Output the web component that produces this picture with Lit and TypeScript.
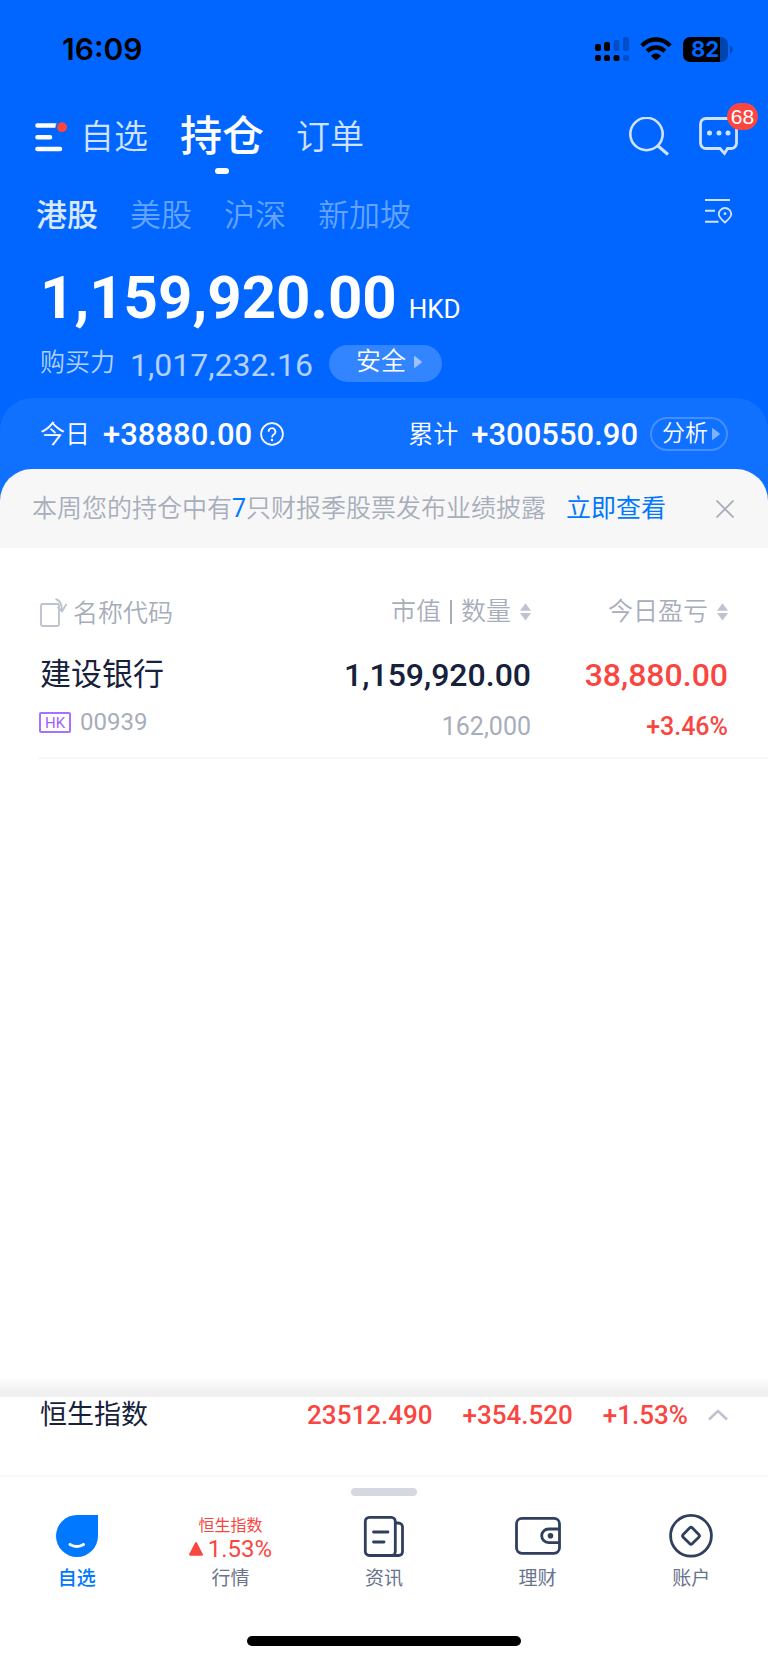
import { LitElement, html, css } from "lit";
import { customElement, state } from "lit/decorators.js";

interface Holding {
  name: string;
  market: string;
  code: string;
  value: string;
  quantity: string;
  profit: string;
  rate: string;
}

@customElement("status-bar")
class StatusBar extends LitElement {
  static styles = css`
    :host {
      display: flex;
      align-items: center;
      justify-content: space-between;
      height: 98px;
      padding: 0 35px 0 62px;
      color: #000;
    }
    time {
      font: 600 30px/36px Inter, sans-serif;
    }
    .icons {
      display: flex;
      align-items: center;
      gap: 11px;
    }
    svg {
      display: block;
    }
    .battery {
      display: grid;
      align-items: center;
    }
    .battery > * {
      grid-area: 1 / 1;
    }
    .level {
      padding-left: 8px;
      color: #0066ff;
      font: 700 22px/25px Inter, sans-serif;
    }
  `;

  render() {
    return html`
      <time>16:09</time>
      <div class="icons">
        <svg width="34" height="26" viewBox="0 0 34 26" aria-hidden="true">
          <g>
            <rect x="0" y="8" width="6" height="7" rx="2" />
            <rect x="9" y="6" width="6" height="9" rx="2" />
            <rect x="0" y="19" width="6" height="6" rx="2" />
            <rect x="9" y="19" width="6" height="6" rx="2" />
            <rect x="18.500" y="19" width="6" height="6" rx="2" />
          </g>
          <g opacity="0.22">
            <rect x="18.500" y="4" width="6" height="11" rx="2" />
            <rect x="28" y="1" width="6" height="14" rx="2" />
            <rect x="28" y="19" width="6" height="6" rx="2" />
          </g>
        </svg>
        <svg width="32" height="24" viewBox="0 0 32 24" aria-hidden="true">
          <path
            d="M0.300 7.200C9-2.200 23-2.200 31.700 7.200L28.700 10.200C21.500 3 10.500 3 3.300 10.200Z"
          />
          <path
            d="M5.500 12.600C11.500 6.700 20.500 6.700 26.500 12.600L23.400 15.700C19 11.700 13 11.700 8.600 15.700Z"
          />
          <path
            d="M11.500 18.300C14 16 18 16 20.500 18.300C20.900 18.700 20.900 19 20.500 19.400L16.700 23.100C16.200 23.600 15.800 23.600 15.300 23.100L11.500 19.400C11.100 19 11.100 18.700 11.500 18.300Z"
          />
        </svg>
        <div class="battery">
          <svg width="50" height="25" viewBox="0 0 50 25" aria-hidden="true">
            <path d="M37 0V25H7A7 7 0 0 1 0 18V7A7 7 0 0 1 7 0Z" />
            <path
              opacity="0.32"
              d="M37 0H38A7 7 0 0 1 45 7V18A7 7 0 0 1 38 25H37ZM47 8.500C50.500 10 50.500 15 47 16.500Z"
            />
          </svg>
          <span class="level">82</span>
        </div>
      </div>
    `;
  }
}

@customElement("sort-mark")
class SortMark extends LitElement {
  static styles = css`
    :host {
      display: block;
    }
    svg {
      display: block;
    }
  `;

  render() {
    return html`<svg width="11" height="18" viewBox="0 0 11 18" fill="#bfc3d0" aria-hidden="true">
      <path d="M5.500 0.300L11 7.800H0ZM0 10H11L5.500 17.500Z" />
    </svg>`;
  }
}

@customElement("tab-bar")
class TabBar extends LitElement {
  static styles = css`
    :host {
      display: block;
      border-top: 2px solid #f7f7f8;
    }
    .handle {
      width: 66px;
      height: 8px;
      margin: 11px auto 19px;
      border-radius: 4px;
      background: #d5d8e1;
    }
    nav {
      display: grid;
      grid-template-columns: repeat(5, 1fr);
    }
    a {
      display: flex;
      flex-direction: column;
      align-items: center;
      gap: 8px;
      color: #69738c;
      font-size: 19px;
      line-height: 28px;
      text-decoration: none;
    }
    a.active {
      color: #0078ff;
      font-weight: 500;
    }
    svg {
      display: block;
      height: 42px;
    }
    .quote {
      display: flex;
      flex-direction: column;
      align-items: center;
      height: 42px;
      color: #f94641;
      font-size: 16px;
      line-height: 22px;
    }
    .change {
      display: flex;
      align-items: center;
      gap: 5px;
      font-size: 24px;
      line-height: 24px;
    }
    .change svg {
      height: 14px;
    }
    .home {
      width: 274px;
      max-width: 60%;
      height: 10px;
      margin: 43px auto 17px;
      border-radius: 5px;
      background: #000;
    }
  `;

  render() {
    return html`
      <div class="handle"></div>
      <nav>
        <a class="active" href="#watch">
          <svg width="42" viewBox="0 0 42 42" aria-hidden="true">
            <path d="M21 0H42V21A21 21 0 1 1 21 0Z" fill="#0078ff" />
            <path
              d="M14 29.500C18 32 23.500 32 27.500 29.500"
              fill="none"
              stroke="#fff"
              stroke-width="3"
              stroke-linecap="round"
            />
          </svg>
          <span>自选</span>
        </a>
        <a href="#quotes">
          <span class="quote">
            <span>恒生指数</span>
            <span class="change">
              <svg width="14" viewBox="0 0 14 14" aria-hidden="true">
                <path
                  d="M7 1.200L12.800 12.600H1.200Z"
                  fill="#f94641"
                  stroke="#f94641"
                  stroke-width="2.200"
                  stroke-linejoin="round"
                />
              </svg>
              1.53%
            </span>
          </span>
          <span>行情</span>
        </a>
        <a href="#news">
          <svg width="42" viewBox="0 0 42 42" fill="none" stroke="#303f5e" stroke-width="2.800" aria-hidden="true">
            <rect x="2.300" y="2.300" width="30" height="38.200" rx="4" />
            <path d="M32.500 8H35.500A4 4 0 0 1 39.500 12V36.800A3.700 3.700 0 0 1 35.800 40.500H28" />
            <path d="M10.500 17H25M10.500 27H21" stroke-linecap="round" />
          </svg>
          <span>资讯</span>
        </a>
        <a href="#wealth">
          <svg width="46" viewBox="0 0 46 42" fill="none" stroke="#303f5e" stroke-width="2.800" aria-hidden="true">
            <rect x="1.500" y="3.300" width="43" height="35" rx="5.500" />
            <path d="M44.500 14H33.500A6.800 6.800 0 0 0 33.500 27.600H44.500" />
            <circle cx="35.500" cy="20.800" r="2.800" fill="#303f5e" stroke="none" />
          </svg>
          <span>理财</span>
        </a>
        <a href="#account">
          <svg width="44" viewBox="0 0 44 42" overflow="visible" fill="none" stroke="#303f5e" stroke-width="2.800" aria-hidden="true">
            <circle cx="22" cy="20.800" r="20.400" />
            <rect x="15.500" y="14.300" width="13" height="13" rx="2" transform="rotate(45 22 20.800)" />
          </svg>
          <span>账户</span>
        </a>
      </nav>
      <div class="home"></div>
    `;
  }
}

@customElement("app-root")
class AppRoot extends LitElement {
  @state() private market = "港股";

  private markets = ["港股", "美股", "沪深", "新加坡"];

  private holdings: Holding[] = [
    {
      name: "建设银行",
      market: "HK",
      code: "00939",
      value: "1,159,920.00",
      quantity: "162,000",
      profit: "38,880.00",
      rate: "+3.46%",
    },
  ];

  static styles = css`
    :host {
      display: flex;
      flex-direction: column;
      min-height: 100vh;
      background: #fff;
      color: #16213b;
      font-family: Roboto, "Noto Sans CJK SC", sans-serif;
      font-weight: 400;
    }
    * {
      box-sizing: border-box;
    }
    button {
      display: flex;
      align-items: center;
      margin: 0;
      padding: 0;
      border: 0;
      background: none;
      color: inherit;
      font: inherit;
      white-space: nowrap;
    }
    svg {
      display: block;
      flex: none;
    }
    a {
      text-decoration: none;
    }
    .top {
      background: #0066ff;
      color: #fff;
    }

    .nav {
      display: flex;
      align-items: center;
      height: 78px;
      padding: 0 30px 0 35px;
    }
    .views {
      display: flex;
      align-items: center;
      gap: 32px;
      margin-left: 13px;
      font-size: 34px;
      line-height: 50px;
    }
    .views a {
      color: #d0e2ff;
      font-weight: 350;
    }
    .views a.current {
      position: relative;
      color: #fff;
      font-size: 42px;
      font-weight: 500;
    }
    .current::after {
      content: "";
      position: absolute;
      left: 50%;
      bottom: -12px;
      width: 14px;
      height: 6px;
      margin-left: -7px;
      border-radius: 3px;
      background: #fff;
    }
    .actions {
      display: flex;
      gap: 30px;
      margin-left: auto;
    }
    .messages {
      position: relative;
    }
    .badge {
      position: absolute;
      top: -14px;
      right: -20px;
      width: 31px;
      height: 27px;
      border-radius: 14px;
      background: #f94641;
      color: #fff;
      font: 400 21px/28px "Liberation Sans", sans-serif;
      text-align: center;
    }

    .markets {
      display: flex;
      align-items: center;
      gap: 32px;
      height: 80px;
      padding: 0 36px;
      font-size: 31px;
      line-height: 46px;
    }
    .markets button {
      color: #66a3ff;
      font-weight: 350;
    }
    .markets button[aria-pressed="true"] {
      color: #d9e8ff;
      font-weight: 500;
    }
    .markets button.filter {
      margin: -10px 0 0 auto;
    }

    .total {
      display: flex;
      align-items: baseline;
      gap: 12px;
      height: 80px;
      padding: 4px 40px 0;
      font-size: 60px;
      font-weight: 700;
      line-height: 76px;
    }
    .currency {
      font-size: 26px;
      font-weight: 400;
    }

    .power {
      display: flex;
      align-items: center;
      height: 62px;
      padding: 0 40px 8px;
      color: #b3d1ff;
      font-size: 32px;
      line-height: 40px;
    }
    .label {
      font-size: 25px;
      font-weight: 350;
    }
    .power .amount {
      margin: 3px 16px 0 15px;
    }
    .power button.safe {
      gap: 8px;
      height: 37px;
      padding: 0 20px 2px 27px;
      border-radius: 19px;
      background: #3385ff;
      color: #fff;
      font-size: 25px;
      font-weight: 350;
    }

    .panel {
      border-radius: 32px 32px 0 0;
      background: #1070ff;
    }
    .gains {
      display: flex;
      align-items: center;
      justify-content: space-between;
      height: 71px;
      padding: 0 40px;
    }
    .gain {
      display: flex;
      align-items: center;
      font-size: 31px;
      font-weight: 500;
      line-height: 40px;
    }
    .gain .label {
      margin-top: 2px;
    }
    .gain .amount {
      margin: 2px 8px 0 13px;
    }
    .gain button.analyse {
      gap: 4px;
      height: 34px;
      padding: 0 6px 0 10px;
      margin-left: 4px;
      border: 2px solid #4590ff;
      border-radius: 17px;
      font-size: 23px;
      font-weight: 350;
    }

    .notice {
      display: flex;
      align-items: center;
      height: 79px;
      padding: 0 34px 0 32px;
      border-radius: 32px 32px 0 0;
      background: #f7f7f7;
      color: #a7adbb;
      font-size: 25px;
      line-height: 36px;
    }
    .notice p {
      margin: 0;
      font-weight: 350;
    }
    .notice a {
      margin-left: 20px;
      color: #0078ff;
    }
    .notice em {
      color: #0078ff;
      font-style: normal;
      font-weight: 400;
    }
    .notice button.close {
      margin-left: auto;
    }

    .holdings {
      flex: 1;
      padding: 45px 0 0 38px;
    }
    table {
      width: 100%;
      border-collapse: collapse;
      table-layout: fixed;
      text-align: right;
    }
    .col-value {
      width: 32%;
    }
    .col-profit {
      width: 237px;
    }
    th,
    td {
      padding: 0;
      white-space: nowrap;
      vertical-align: top;
    }
    th:last-child,
    td:last-child {
      padding-right: 40px;
    }
    th:first-child,
    td:first-child {
      text-align: left;
    }
    thead th {
      color: #a7adbb;
      font-size: 25px;
      font-weight: 350;
      line-height: 38px;
    }
    thead button {
      gap: 9px;
      margin-left: auto;
    }
    thead th:first-child button {
      gap: 6px;
      margin: 2px 0 0 1px;
    }
    .bar {
      width: 2px;
      height: 24px;
      background: #a7adbb;
    }
    tbody tr {
      border-bottom: 2px solid #f8f8f9;
    }
    tbody td {
      height: 125px;
      padding-top: 20px;
      font-size: 32px;
      font-weight: 500;
      line-height: 44px;
    }
    .name {
      padding-left: 2px;
      font-size: 31px;
      font-weight: 400;
    }
    .id {
      display: flex;
      align-items: center;
      gap: 9px;
      height: 50px;
      padding-left: 1px;
      color: #a7adbb;
      font-size: 24px;
      font-weight: 400;
    }
    .tag {
      width: 32px;
      height: 21px;
      border: 2px solid #a870ff;
      border-radius: 2px;
      color: #a060ff;
      font-size: 15px;
      line-height: 18px;
      text-align: center;
    }
    .second {
      padding-top: 8px;
      color: #a7adbb;
      font-size: 25px;
      font-weight: 400;
    }
    .up,
    .up .second {
      color: #f94641;
    }
    .up .second {
      font-weight: 500;
    }

    .fade {
      height: 20px;
      background: linear-gradient(#fff, #f0f0f0 70%);
    }
    .index {
      display: flex;
      align-items: center;
      gap: 30px;
      height: 78px;
      padding: 0 40px 42px;
      color: #f94641;
      font-size: 26px;
      font-weight: 500;
      line-height: 36px;
    }
    .index .title {
      margin-right: auto;
      color: #16213b;
      font-size: 27px;
      font-weight: 400;
    }
    .index button {
      margin-left: -10px;
    }
  `;

  private arrow(color: string) {
    return html`<svg width="8" height="12" viewBox="0 0 8 12" fill=${color} aria-hidden="true">
      <path d="M0 1Q0 -0.500 1.300 0.500L7.400 5.200Q8.200 6 7.400 6.800L1.300 11.500Q0 12.500 0 11Z" />
    </svg>`;
  }

  render() {
    return html`
      <header class="top">
        <status-bar></status-bar>
        <div class="nav">
          <button aria-label="菜单">
            <svg width="32" height="30" viewBox="0 0 32 30" aria-hidden="true">
              <g fill="none" stroke="#fff" stroke-width="4.600">
                <path d="M2.500 3.500H20.500M2.500 15.200H15M2.500 27H25" stroke-linecap="round" />
              </g>
              <circle cx="27" cy="5.200" r="6.500" fill="#0066ff" />
              <circle cx="27" cy="5.200" r="5" fill="#f94641" />
            </svg>
          </button>
          <nav class="views">
            <a href="#watch">自选</a>
            <a href="#positions" class="current">持仓</a>
            <a href="#orders">订单</a>
          </nav>
          <div class="actions">
            <button aria-label="搜索">
              <svg width="40" height="40" viewBox="0 0 40 40" fill="none" stroke="#d0e2ff" stroke-width="2.600" aria-hidden="true">
                <circle cx="17.500" cy="17" r="16.200" />
                <path d="M28.500 28.500L39 37.500" stroke-width="3" />
              </svg>
            </button>
            <button class="messages" aria-label="消息 68">
              <svg width="39" height="40" viewBox="0 0 39 40" aria-hidden="true">
                <path
                  d="M7 1.500H32A5.500 5.500 0 0 1 37.500 7V26A5.500 5.500 0 0 1 32 31.500H28.500L25.500 36.500L21 31.500H7A5.500 5.500 0 0 1 1.500 26V7A5.500 5.500 0 0 1 7 1.500Z"
                  fill="none"
                  stroke="#d0e2ff"
                  stroke-width="2.800"
                />
                <g fill="#d0e2ff">
                  <circle cx="10.500" cy="16" r="2.500" />
                  <circle cx="20" cy="16" r="2.500" />
                  <circle cx="29" cy="16" r="2.500" />
                </g>
              </svg>
              <span class="badge">68</span>
            </button>
          </div>
        </div>
        <div class="markets">
          ${this.markets.map(
            (m) => html`<button
              aria-pressed=${m === this.market ? "true" : "false"}
              @click=${() => (this.market = m)}
            >
              ${m}
            </button>`,
          )}
          <button class="filter" aria-label="筛选">
            <svg width="28" height="26" viewBox="0 0 28 26" fill="none" stroke="#d0e2ff" stroke-width="2" aria-hidden="true">
              <path d="M1 2H26M1 12.700H11M1 23.700H14.500" />
              <path d="M21 24.500C17 21 14.800 19 14.800 16.200A6.200 6.200 0 0 1 27.200 16.200C27.200 19 25 21 21 24.500Z" stroke-width="1.800" />
              <circle cx="21" cy="15.700" r="1.400" fill="#d0e2ff" stroke="none" />
            </svg>
          </button>
        </div>
        <div class="total"><span>1,159,920.00</span><span class="currency">HKD</span></div>
        <div class="power">
          <span class="label">购买力</span>
          <span class="amount">1,017,232.16</span>
          <button class="safe">安全 ${this.arrow("#99c2ff")}</button>
        </div>
        <div class="panel">
          <div class="gains">
            <div class="gain">
              <span class="label">今日</span>
              <span class="amount">+38880.00</span>
              <button aria-label="说明">
                <svg width="24" height="24" viewBox="0 0 24 24" fill="none" stroke="#fff" stroke-width="1.700" aria-hidden="true">
                  <circle cx="12" cy="12" r="10.900" />
                  <path d="M8.600 9.800A3.400 3.400 0 1 1 13.700 12.500C12.500 13.200 12 13.800 12 15.400" />
                  <circle cx="12" cy="18" r="1.200" fill="#fff" stroke="none" />
                </svg>
              </button>
            </div>
            <div class="gain">
              <span class="label">累计</span>
              <span class="amount">+300550.90</span>
              <button class="analyse">分析 ${this.arrow("#7db2ff")}</button>
            </div>
          </div>
          <div class="notice">
            <p>本周您的持仓中有<em>7</em>只财报季股票发布业绩披露</p>
            <a href="#reports">立即查看</a>
            <button class="close" aria-label="关闭">
              <svg width="18" height="18" viewBox="0 0 18 18" stroke="#a7adbb" stroke-width="1.800" aria-hidden="true">
                <path d="M0.500 0.500L17.500 17.500M17.500 0.500L0.500 17.500" />
              </svg>
            </button>
          </div>
        </div>
      </header>

      <main class="holdings">
        <table>
          <colgroup>
            <col />
            <col class="col-value" />
            <col class="col-profit" />
          </colgroup>
          <thead>
            <tr>
              <th scope="col">
                <button>
                  <svg width="28" height="32" viewBox="0 0 28 32" fill="none" stroke="#bfc3d0" stroke-width="1.900" aria-hidden="true">
                    <rect x="2" y="6" width="18" height="22" rx="1.500" />
                    <path d="M16.500 1C21 2 23 6 23 13M18.800 9L23 13.500L27.500 6" />
                  </svg>
                  名称代码
                </button>
              </th>
              <th scope="col">
                <button>市值<span class="bar"></span>数量<sort-mark></sort-mark></button>
              </th>
              <th scope="col">
                <button>今日盈亏<sort-mark></sort-mark></button>
              </th>
            </tr>
          </thead>
          <tbody>
            ${this.holdings.map(
              (h) => html`<tr>
                <td>
                  <div class="name">${h.name}</div>
                  <div class="id"><span class="tag">${h.market}</span>${h.code}</div>
                </td>
                <td>
                  <div>${h.value}</div>
                  <div class="second">${h.quantity}</div>
                </td>
                <td class="up">
                  <div>${h.profit}</div>
                  <div class="second">${h.rate}</div>
                </td>
              </tr>`,
            )}
          </tbody>
        </table>
      </main>

      <footer>
        <div class="fade"></div>
        <div class="index">
          <span class="title">恒生指数</span>
          <span>23512.490</span>
          <span>+354.520</span>
          <span>+1.53%</span>
          <button aria-label="展开">
            <svg width="20" height="12" viewBox="0 0 20 12" fill="none" stroke="#bfc3d0" stroke-width="2.600" aria-hidden="true">
              <path d="M1 10.500L10 2L19 10.500" />
            </svg>
          </button>
        </div>
        <tab-bar></tab-bar>
      </footer>
    `;
  }
}
